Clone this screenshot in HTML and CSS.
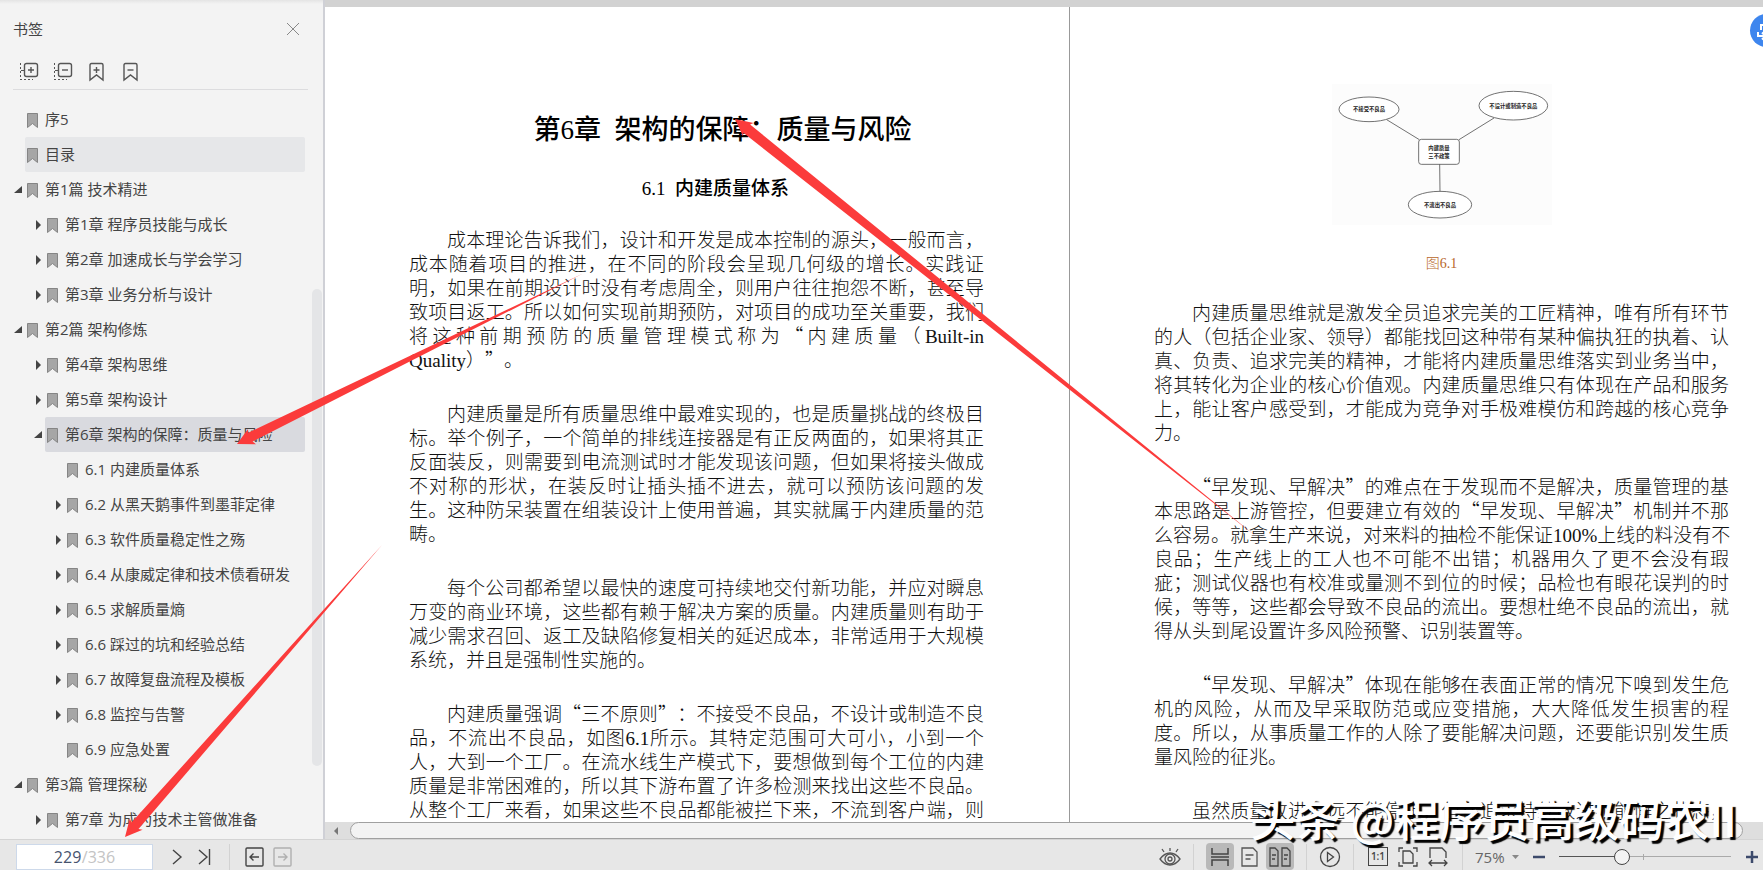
FILE: index.html
```html
<!DOCTYPE html>
<html lang="zh-CN">
<head>
    <meta charset="UTF-8">
    <meta name="viewport" content="width=device-width, initial-scale=1.0">
    <title>第6章 架构的保障：质量与风险</title>
    <link rel="stylesheet" href="styles.css">
</head>
<body>
<svg class="defs" aria-hidden="true">
    <symbol id="mark" viewBox="0 0 11 15"><path d="M.5.5h10v14L5.500 10.500.5 14.500z" fill="#a6a6a6" stroke="#858585"/></symbol>
    <symbol id="closed" viewBox="0 0 8 10"><path d="M2 0l5 5-5 5z" fill="#444"/></symbol>
    <symbol id="open" viewBox="0 0 8 10"><path d="M8 1v7H0z" fill="#444"/></symbol>
</svg>

<div class="app">
    <div class="workspace">
        <aside class="sidebar">
            <div class="sidebar-head">
                <span>书签</span>
                <button class="icon-btn" aria-label="关闭"><svg width="14" height="14"><path d="M1 1l12 12M13 1L1 13" stroke="#888" fill="none"/></svg></button>
            </div>
            <div class="sidebar-tools">
                <button class="icon-btn" aria-label="展开"><svg width="20" height="20" fill="none" stroke="#555"><path d="M1.500 1v17M1 17.500h13" stroke-dasharray="2 2"/><path d="M2 8.500h3"/><rect x="5.500" y="1.500" width="13" height="13" rx="2" stroke-width="1.400"/><path d="M9 8h6M12 5v6" stroke-width="1.400"/></svg></button>
                <button class="icon-btn" aria-label="收起"><svg width="20" height="20" fill="none" stroke="#555"><path d="M1.500 1v17M1 17.500h13" stroke-dasharray="2 2"/><path d="M2 8.500h3"/><rect x="5.500" y="1.500" width="13" height="13" rx="2" stroke-width="1.400"/><path d="M9 8h6" stroke-width="1.400"/></svg></button>
                <button class="icon-btn" aria-label="添加书签"><svg width="20" height="20" fill="none" stroke="#555" stroke-width="1.400"><path d="M3 18V3q0-1.500 1.500-1.500h10Q16 1.500 16 3v15l-6.500-5z"/><path d="M6.500 8h6M9.500 5v6"/></svg></button>
                <button class="icon-btn" aria-label="删除书签"><svg width="20" height="20" fill="none" stroke="#555" stroke-width="1.400"><path d="M3 18V3q0-1.500 1.500-1.500h10Q16 1.500 16 3v15l-6.500-5z"/><path d="M6.500 8h6"/></svg></button>
            </div>
            <div class="tree-wrap">
                <ul class="tree">
                    <li class="row"><span class="toggle"></span><a href="#" class="item"><svg class="mark"><use href="#mark"/></svg>序5</a></li>
                    <li class="row"><span class="toggle"></span><a href="#" class="item hover"><svg class="mark"><use href="#mark"/></svg>目录</a></li>
                    <li class="row"><button class="toggle" aria-label="收起"><svg><use href="#open"/></svg></button><a href="#" class="item"><svg class="mark"><use href="#mark"/></svg>第1篇 技术精进</a></li>
                    <li class="row level-1"><button class="toggle" aria-label="展开"><svg><use href="#closed"/></svg></button><a href="#" class="item"><svg class="mark"><use href="#mark"/></svg>第1章 程序员技能与成长</a></li>
                    <li class="row level-1"><button class="toggle" aria-label="展开"><svg><use href="#closed"/></svg></button><a href="#" class="item"><svg class="mark"><use href="#mark"/></svg>第2章 加速成长与学会学习</a></li>
                    <li class="row level-1"><button class="toggle" aria-label="展开"><svg><use href="#closed"/></svg></button><a href="#" class="item"><svg class="mark"><use href="#mark"/></svg>第3章 业务分析与设计</a></li>
                    <li class="row"><button class="toggle" aria-label="收起"><svg><use href="#open"/></svg></button><a href="#" class="item"><svg class="mark"><use href="#mark"/></svg>第2篇 架构修炼</a></li>
                    <li class="row level-1"><button class="toggle" aria-label="展开"><svg><use href="#closed"/></svg></button><a href="#" class="item"><svg class="mark"><use href="#mark"/></svg>第4章 架构思维</a></li>
                    <li class="row level-1"><button class="toggle" aria-label="展开"><svg><use href="#closed"/></svg></button><a href="#" class="item"><svg class="mark"><use href="#mark"/></svg>第5章 架构设计</a></li>
                    <li class="row level-1"><button class="toggle" aria-label="收起"><svg><use href="#open"/></svg></button><a href="#" class="item active"><svg class="mark"><use href="#mark"/></svg>第6章 架构的保障：质量与风险</a></li>
                    <li class="row level-2"><span class="toggle"></span><a href="#" class="item"><svg class="mark"><use href="#mark"/></svg>6.1 内建质量体系</a></li>
                    <li class="row level-2"><button class="toggle" aria-label="展开"><svg><use href="#closed"/></svg></button><a href="#" class="item"><svg class="mark"><use href="#mark"/></svg>6.2 从黑天鹅事件到墨菲定律</a></li>
                    <li class="row level-2"><button class="toggle" aria-label="展开"><svg><use href="#closed"/></svg></button><a href="#" class="item"><svg class="mark"><use href="#mark"/></svg>6.3 软件质量稳定性之殇</a></li>
                    <li class="row level-2"><button class="toggle" aria-label="展开"><svg><use href="#closed"/></svg></button><a href="#" class="item"><svg class="mark"><use href="#mark"/></svg>6.4 从康威定律和技术债看研发</a></li>
                    <li class="row level-2"><button class="toggle" aria-label="展开"><svg><use href="#closed"/></svg></button><a href="#" class="item"><svg class="mark"><use href="#mark"/></svg>6.5 求解质量熵</a></li>
                    <li class="row level-2"><button class="toggle" aria-label="展开"><svg><use href="#closed"/></svg></button><a href="#" class="item"><svg class="mark"><use href="#mark"/></svg>6.6 踩过的坑和经验总结</a></li>
                    <li class="row level-2"><button class="toggle" aria-label="展开"><svg><use href="#closed"/></svg></button><a href="#" class="item"><svg class="mark"><use href="#mark"/></svg>6.7 故障复盘流程及模板</a></li>
                    <li class="row level-2"><button class="toggle" aria-label="展开"><svg><use href="#closed"/></svg></button><a href="#" class="item"><svg class="mark"><use href="#mark"/></svg>6.8 监控与告警</a></li>
                    <li class="row level-2"><span class="toggle"></span><a href="#" class="item"><svg class="mark"><use href="#mark"/></svg>6.9 应急处置</a></li>
                    <li class="row"><button class="toggle" aria-label="收起"><svg><use href="#open"/></svg></button><a href="#" class="item"><svg class="mark"><use href="#mark"/></svg>第3篇 管理探秘</a></li>
                    <li class="row level-1"><button class="toggle" aria-label="展开"><svg><use href="#closed"/></svg></button><a href="#" class="item"><svg class="mark"><use href="#mark"/></svg>第7章 为成为技术主管做准备</a></li>
                </ul>
                <div class="tree-scroll"></div>
            </div>
        </aside>

        <main class="viewer">
            <div class="pages">
                <article class="page page-left">
                    <h1>第<span class="latin">6</span>章<span class="latin">&nbsp; </span>架构的保障：质量与风险</h1>
                    <h2><span class="latin">6.1&nbsp; </span>内建质量体系</h2>
                    <p>
                        <span class="line first">成本理论告诉我们，设计和开发是成本控制的源头，一般而言，</span>
                        <span class="line">成本随着项目的推进，在不同的阶段会呈现几何级的增长。实践证</span>
                        <span class="line">明，如果在前期设计时没有考虑周全，则用户往往抱怨不断，甚至导</span>
                        <span class="line">致项目返工。所以如何实现前期预防，对项目的成功至关重要，我们</span>
                        <span class="line">将这种前期预防的质量管理模式称为“内建质量（<span class="latin">Built-in</span></span>
                        <span class="line last"><span class="latin">Quality</span>）”。</span>
                    </p>
                    <p>
                        <span class="line first">内建质量是所有质量思维中最难实现的，也是质量挑战的终极目</span>
                        <span class="line">标。举个例子，一个简单的排线连接器是有正反两面的，如果将其正</span>
                        <span class="line">反面装反，则需要到电流测试时才能发现该问题，但如果将接头做成</span>
                        <span class="line">不对称的形状，在装反时让插头插不进去，就可以预防该问题的发</span>
                        <span class="line">生。这种防呆装置在组装设计上使用普遍，其实就属于内建质量的范</span>
                        <span class="line last">畴。</span>
                    </p>
                    <p>
                        <span class="line first">每个公司都希望以最快的速度可持续地交付新功能，并应对瞬息</span>
                        <span class="line">万变的商业环境，这些都有赖于解决方案的质量。内建质量则有助于</span>
                        <span class="line">减少需求召回、返工及缺陷修复相关的延迟成本，非常适用于大规模</span>
                        <span class="line last">系统，并且是强制性实施的。</span>
                    </p>
                    <p>
                        <span class="line first">内建质量强调“三不原则”：不接受不良品，不设计或制造不良</span>
                        <span class="line">品，不流出不良品，如图<span class="latin">6.1</span>所示。其特定范围可大可小，小到一个</span>
                        <span class="line">人，大到一个工厂。在流水线生产模式下，要想做到每个工位的内建</span>
                        <span class="line">质量是非常困难的，所以其下游布置了许多检测来找出这些不良品。</span>
                        <span class="line">从整个工厂来看，如果这些不良品都能被拦下来，不流到客户端，则</span>
                    </p>
                </article>

                <article class="page page-right">
                    <figure>
                        <svg class="diagram" viewBox="0 0 660 423">
                            <rect width="660" height="423" fill="#fcfcfc"/>
                            <g fill="#fff" stroke="#555" stroke-width="2.500">
                                <path d="M164 107l98 60M486 102l-105 65M323 240l1 84"/>
                                <ellipse cx="111" cy="76" rx="90" ry="37"/>
                                <ellipse cx="544" cy="65" rx="103" ry="43"/>
                                <ellipse cx="324" cy="362" rx="95" ry="40"/>
                                <rect x="260" y="166" width="122" height="75" rx="8"/>
                            </g>
                            <g class="diagram-text">
                                <text x="111" y="82">不接受不良品</text>
                                <text x="544" y="71">不设计或制造不良品</text>
                                <text x="321" y="198">内建质量</text>
                                <text x="321" y="221">三不政策</text>
                                <text x="324" y="369">不流出不良品</text>
                            </g>
                        </svg>
                        <figcaption>图<span class="latin">6.1</span></figcaption>
                    </figure>
                    <p>
                        <span class="line first">内建质量思维就是激发全员追求完美的工匠精神，唯有所有环节</span>
                        <span class="line">的人（包括企业家、领导）都能找回这种带有某种偏执狂的执着、认</span>
                        <span class="line">真、负责、追求完美的精神，才能将内建质量思维落实到业务当中，</span>
                        <span class="line">将其转化为企业的核心价值观。内建质量思维只有体现在产品和服务</span>
                        <span class="line">上，能让客户感受到，才能成为竞争对手极难模仿和跨越的核心竞争</span>
                        <span class="line last">力。</span>
                    </p>
                    <p>
                        <span class="line first">“早发现、早解决”的难点在于发现而不是解决，质量管理的基</span>
                        <span class="line">本思路是上游管控，但要建立有效的“早发现、早解决”机制并不那</span>
                        <span class="line">么容易。就拿生产来说，对来料的抽检不能保证<span class="latin">100%</span>上线的料没有不</span>
                        <span class="line">良品；生产线上的工人也不可能不出错；机器用久了更不会没有瑕</span>
                        <span class="line">疵；测试仪器也有校准或量测不到位的时候；品检也有眼花误判的时</span>
                        <span class="line">候，等等，这些都会导致不良品的流出。要想杜绝不良品的流出，就</span>
                        <span class="line last">得从头到尾设置许多风险预警、识别装置等。</span>
                    </p>
                    <p>
                        <span class="line first">“早发现、早解决”体现在能够在表面正常的情况下嗅到发生危</span>
                        <span class="line">机的风险，从而及早采取防范或应变措施，大大降低发生损害的程</span>
                        <span class="line">度。所以，从事质量工作的人除了要能解决问题，还要能识别发生质</span>
                        <span class="line last">量风险的征兆。</span>
                    </p>
                    <p>
                        <span class="line first">虽然质量改进永远不能停止，但在追求持续改进不能懈之状态，</span>
                    </p>
                </article>
            </div>
            <div class="h-scroll">
                <button class="h-arrow" aria-label="向左滚动"><svg width="6" height="8"><path d="M5 0v8L1 4z" fill="#777"/></svg></button>
                <div class="h-thumb"></div>
            </div>
        </main>
    </div>

    <footer class="statusbar">
        <label class="page-box"><input type="text" value="229" aria-label="页码"><span>/336</span></label>
        <button class="icon-btn next" aria-label="下一页"><svg width="12" height="18"><path d="M2 2l8 7-8 7" fill="none" stroke="#444" stroke-width="1.400"/></svg></button>
        <button class="icon-btn last-page" aria-label="末页"><svg width="14" height="18"><path d="M2 2l8 7-8 7M12.500 1v16" fill="none" stroke="#444" stroke-width="1.400"/></svg></button>
        <i class="sep"></i>
        <button class="icon-btn back" aria-label="后退"><svg width="20" height="20" fill="none" stroke="#444" stroke-width="1.400"><rect x="1" y="1" width="17" height="18" rx="1"/><path d="M5 10h9M8.500 6.500L5 10l3.500 3.500"/></svg></button>
        <button class="icon-btn" aria-label="前进"><svg width="20" height="20" fill="none" stroke="#b0b0b0" stroke-width="1.400"><rect x="1" y="1" width="17" height="18" rx="1"/><path d="M5 10h9M10.500 6.500L14 10l-3.500 3.500"/></svg></button>

        <div class="view-tools">
            <button class="icon-btn" aria-label="护眼模式"><svg width="22" height="22" fill="none" stroke="#555" stroke-width="1.300"><path d="M1 13q4.500-6 10-6t10 6q-4.500 6-10 6t-10-6z"/><circle cx="11" cy="13" r="5"/><circle cx="11" cy="13" r="2"/><path d="M11 2v3M3 3l2 3M19 3l-2 3"/></svg></button>
            <i class="sep"></i>
            <button class="icon-btn mode on" aria-label="连续"><svg width="20" height="22" fill="none" stroke="#444" stroke-width="1.500"><path d="M2 2v6h16V2M2 20v-6h16v6M1 11h18"/></svg></button>
            <button class="icon-btn single" aria-label="单页"><svg width="18" height="22" fill="none" stroke="#555" stroke-width="1.300"><path d="M1 2h11l4 4v14H1zM4.500 9h8M4.500 13h5"/></svg></button>
            <button class="icon-btn mode on" aria-label="双页"><svg width="22" height="22" fill="none" stroke="#444" stroke-width="1.300"><path d="M1 2h5l3 3v15H1zM13 2h5l3 3v15h-8zM3 9h4M3 13h3M15 9h4M15 13h3"/></svg></button>
            <i class="sep"></i>
            <button class="icon-btn" aria-label="播放"><svg width="22" height="22" fill="none" stroke="#444" stroke-width="1.300"><circle cx="11" cy="11" r="9.500"/><path d="M8.500 6.500v9l6-4.500z"/></svg></button>
            <i class="sep"></i>
            <div class="fit-group">
                <button class="icon-btn ratio" aria-label="实际大小">1:1</button>
                <button class="icon-btn" aria-label="适合页面"><svg width="20" height="20" fill="none" stroke="#444" stroke-width="1.300"><path d="M5 4h7l3 3v9H5zM1 5V1h4M15 1h4v4M19 15v4h-4M5 19H1v-4"/></svg></button>
                <button class="icon-btn" aria-label="适合宽度"><svg width="20" height="20" fill="none" stroke="#444" stroke-width="1.300"><path d="M2 11V1h12l4 4v6M1 16h18M4 13l-3 3 3 3M16 13l3 3-3 3"/></svg></button>
            </div>
            <i class="sep"></i>
            <div class="zoom-level">
                <select aria-label="缩放"><option>75%</option></select>
                <svg width="7" height="4"><path d="M0 0h7L3.500 4z" fill="#888"/></svg>
            </div>
            <button class="icon-btn minus" aria-label="缩小"><svg width="14" height="14"><path d="M1 7h12" stroke="#3c4a6b" stroke-width="2.500"/></svg></button>
            <input class="zoom-slider" type="range" min="0" max="100" value="35" aria-label="缩放比例">
            <button class="icon-btn" aria-label="放大"><svg width="14" height="14"><path d="M1 7h12M7 1v12" stroke="#3c4a6b" stroke-width="2.500"/></svg></button>
        </div>
    </footer>

    <button class="convert" aria-label="转换"><svg width="33" height="33" fill="none" stroke="#fff" stroke-width="2"><path d="M11 16v-5h12v13h-4M8 18v4h7M12 18.500l3.500 3.500-3.500 3.500"/></svg></button>

    <svg class="arrows" width="1763" height="870" fill="#fb3b3b" aria-hidden="true">
        <path d="M237 444L248 429 248.200 432.800 583 273.500 252.600 441.500 256 444.300z"/>
        <path d="M125 837L129.800 818.600 131.500 822.500 382 545 138.500 829 142.600 829.800z"/>
        <path d="M735 119L753.600 123 750.100 124.500 1258 538 743.300 132.700 743 136.200z"/>
    </svg>
    <div class="watermark">头条 @程序员高级码农II</div>
</div>
</body>
</html>
```
FILE: styles.css
```css
* {
    box-sizing: border-box;
}

body {
    margin: 0;
    font-family: "Open Sans", "Noto Sans CJK SC", sans-serif;
    font-size: 15px;
    color: #444;
    background-color: #e7e7e7;
}

button, input, select {
    font: inherit;
    color: inherit;
    margin: 0;
    padding: 0;
    border: none;
    background: none;
    outline: none;
}

svg {
    display: block;
}

.defs {
    position: absolute;
    width: 0;
    height: 0;
}

.app {
    position: relative;
    height: 100vh;
    display: flex;
    flex-direction: column;
    overflow: hidden;
}

.workspace {
    flex: 1;
    min-height: 0;
    display: flex;
}

.icon-btn {
    display: flex;
    align-items: center;
    justify-content: center;
    flex-shrink: 0;
}

/* Bookmark panel */
.sidebar {
    width: 325px;
    flex-shrink: 0;
    display: flex;
    flex-direction: column;
    background: linear-gradient(#e4e4e4, #f3f3f3 4px);
    border-right: 2px solid #cfd0d6;
}

.sidebar-head {
    display: flex;
    justify-content: space-between;
    align-items: center;
    padding: 17px 23px 0 13px;
    line-height: 24px;
}

.sidebar-tools {
    display: flex;
    gap: 14px;
    margin: 21px 15px 12px 13px;
    padding: 0 6px 7px;
    border-bottom: 1px solid #dcdcde;
}

.tree-wrap {
    flex: 1;
    min-height: 0;
    display: flex;
    overflow: hidden;
}

.tree {
    flex: 1;
    margin: 0;
    padding: 0;
    list-style: none;
}

.row {
    display: flex;
    height: 35px;
    padding-left: 14px;
}

.level-1 {
    padding-left: 34px;
}

.level-2 {
    padding-left: 54px;
}

.toggle {
    width: 11px;
    display: flex;
    align-items: center;
}

.toggle svg {
    width: 8px;
    height: 10px;
}

.item {
    flex: 1;
    display: flex;
    align-items: center;
    gap: 7px;
    padding-left: 2px;
    padding-bottom: 2px;
    border-radius: 2px;
    color: inherit;
    text-decoration: none;
    white-space: nowrap;
}

.hover {
    background-color: #e6e7e9;
}

.active {
    background-color: #d9dadf;
}

.mark {
    width: 11px;
    height: 15px;
    margin-top: 3px;
}

.tree-scroll {
    width: 10px;
    height: 477px;
    margin: 187px 1px 0 7px;
    border-radius: 5px;
    background-color: #e4e5e7;
}

/* Document */
.viewer {
    flex: 1;
    min-width: 0;
    display: flex;
    flex-direction: column;
    border-top: 7px solid #d2d2d2;
}

.pages {
    flex: 1;
    min-height: 0;
    display: grid;
    grid-template-columns: minmax(0, 745fr) minmax(0, 693fr);
    overflow: hidden;
    background-color: #fff;
}

.page {
    font-family: "Noto Sans CJK SC", sans-serif;
    font-size: 19px;
    line-height: 24px;
    color: #111;
    font-weight: 300;
    text-spacing-trim: space-all;
}

.page-left {
    padding: 104px 85px 0 84px;
    border-right: 1px solid #999;
}

.page-right {
    padding: 77px 34px 0 84px;
}

.latin {
    font-family: "Liberation Serif", serif;
    font-weight: 400;
    line-height: 1;
}

h1, h2 {
    margin: 0 0 28px;
    text-align: center;
    font-weight: 500;
    color: #000;
}

h1 {
    height: 36px;
    font-size: 27px;
    line-height: 34px;
    padding-left: 52px;
}

h2 {
    height: 24px;
    font-size: 19px;
    line-height: 24px;
    padding-left: 38px;
}

.page p {
    margin: 0 0 30px;
}

.line {
    display: block;
    height: 24px;
    white-space: nowrap;
    text-align: justify;
    text-align-last: justify;
}

.first {
    text-indent: 2em;
}

.last {
    text-align-last: left;
}

figure {
    margin: 0 0 26px;
    text-align: center;
}

.diagram {
    width: 220px;
    height: 141px;
    margin: 0 auto 25px;
}

.diagram-text {
    font-size: 16px;
    font-weight: 700;
    text-anchor: middle;
    fill: #222;
}

figcaption {
    height: 24px;
    font-size: 14px;
    color: #b8672a;
}

.h-scroll {
    height: 17px;
    display: flex;
    background-color: #dedede;
    padding-right: 20px;
}

.h-arrow {
    width: 25px;
    display: flex;
    align-items: center;
    padding-left: 8px;
}

.h-thumb {
    flex: 1;
    border: 1px solid #a0a0a0;
    border-radius: 9px;
    background-color: #f3f3f3;
}

/* Status bar */
.statusbar {
    height: 31px;
    flex-shrink: 0;
    display: flex;
    align-items: center;
    padding: 3px 4px 0 16px;
    background-color: #e7e7e7;
    border-top: 1px solid #d4d4d4;
}

.page-box {
    width: 137px;
    height: 26px;
    display: flex;
    align-items: center;
    justify-content: center;
    font-size: 16px;
    color: #c4c4c4;
    background-color: #fff;
    border: 1px solid #cdd9ea;
}

.page-box input {
    width: 28px;
    color: #46536e;
}

.next {
    margin-left: 18px;
}

.last-page {
    margin: 0 18px 0 14px;
}

.sep {
    width: 1px;
    height: 26px;
    background-color: #d2d2d2;
}

.back {
    margin: 0 8px 0 15px;
}

.view-tools {
    margin-left: auto;
    display: flex;
    align-items: center;
}

.view-tools .sep {
    margin: 0 12px;
}

.mode {
    width: 28px;
    height: 27px;
    border-radius: 4px;
}

.on {
    background-color: #b9b9b9;
}

.single {
    margin: 0 7px;
}

.fit-group {
    display: flex;
    gap: 10px;
    padding: 0 2px;
}

.ratio {
    width: 20px;
    height: 19px;
    border: 1px solid #444;
    font-size: 10px;
    font-weight: 600;
}

.zoom-level {
    display: flex;
    align-items: center;
    gap: 5px;
}

.zoom-level select {
    appearance: none;
    width: 32px;
    color: #666;
}

.minus {
    margin: 0 13px;
}

.zoom-slider {
    appearance: none;
    width: 172px;
    height: 18px;
    margin-right: 14px;
    background:
        linear-gradient(#aaa, #aaa) 49% 50% / 1px 6px no-repeat,
        linear-gradient(#555, #555) 0 50% / 35% 1px no-repeat,
        linear-gradient(#aaa, #aaa) 0 50% / 100% 1px no-repeat;
}

.zoom-slider::-webkit-slider-thumb {
    appearance: none;
    width: 16px;
    height: 16px;
    border: 1px solid #444;
    border-radius: 50%;
    background-color: #f3f3f3;
}

/* Floating button, arrows and watermark over the document */
.convert {
    position: absolute;
    top: 14px;
    right: -20px;
    width: 33px;
    height: 33px;
    border-radius: 50%;
    background-color: #3e86ee;
}

.arrows {
    position: absolute;
    top: 0;
    left: 0;
    pointer-events: none;
}

.watermark {
    position: absolute;
    right: 26px;
    bottom: 22px;
    font-family: "Noto Sans CJK SC", sans-serif;
    font-size: 45px;
    line-height: 60px;
    font-weight: 500;
    color: #fff;
    white-space: nowrap;
    text-shadow: 3px 3px 1px #000;
    pointer-events: none;
}
```
